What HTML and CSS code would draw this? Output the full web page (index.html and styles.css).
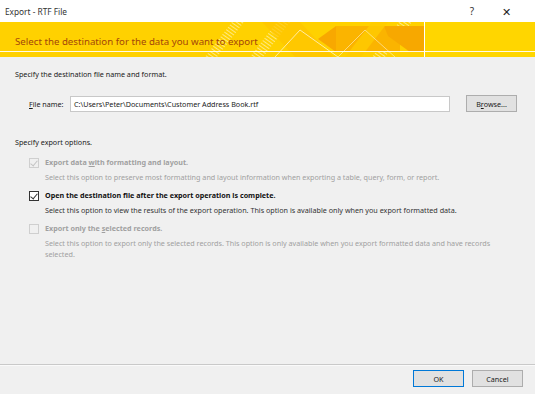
FILE: index.html
```html
<!DOCTYPE html>
<html>
  <head>
    <meta charset="UTF-8">
    <title>Export - RTF File</title>
    <link rel="stylesheet" href="styles.css">
  </head>
  <body>
    <div class="dialog">
      <header class="titlebar">
        <span class="titlebar__title">Export - RTF File</span>
        <span class="titlebar__help">?</span>
        <span class="titlebar__close">&#x2715;</span>
      </header>

      <div class="banner">
        <svg class="banner__art" width="535" height="35" viewBox="0 0 535 35">
          <defs>
            <pattern id="hatch" width="3" height="3" patternUnits="userSpaceOnUse" patternTransform="rotate(-55)">
              <rect width="1" height="3" fill="#fff" opacity="0.5"/>
            </pattern>
          </defs>
          <rect width="535" height="35" fill="#ffd100"/>
          <rect x="424" width="111" height="35" fill="#ffd600"/>
          <!-- stripes -->
          <polygon points="205,35 232,0 244,0 217,35" fill="url(#hatch)"/>
          <polygon points="250,35 277,0 290,0 263,35" fill="url(#hatch)"/>
          <polygon points="372,35 399,0 412,0 385,35" fill="url(#hatch)"/>
          <!-- arrows -->
          <polygon points="262,0 300,0 333,35 295,35" fill="#ffc400" opacity="0.7"/>
          <polygon points="318,17 336,4 336,30" fill="#f8a800"/>
          <polygon points="336,4 400,4 400,30 336,30" fill="#fbb400"/>
          <polygon points="384,4 424,4 424,30 410,30 388,14" fill="#f7a800"/>
          <polygon points="345,35 372,0 388,0 361,35" fill="#ffcc00" opacity="0.8"/>
          <polyline points="275,35 300,8 338,35" fill="none" stroke="#fff" stroke-width="0.8" opacity="0.8"/>
          <polyline points="338,35 365,8 395,35" fill="none" stroke="#fff" stroke-width="0.8" opacity="0.6"/>
          <!-- rules -->
          <rect y="29" width="535" height="1" fill="#fff" opacity="0.9"/>
          <rect x="424" width="1" height="35" fill="#fff"/>
        </svg>
        <h1 class="banner__text">Select the destination for the data you want to export</h1>
      </div>

      <main class="content">
        <p class="content__heading">Specify the destination file name and format.</p>
        <div class="file-row">
          <label class="file-row__label"><u>F</u>ile name:</label>
          <div class="file-row__input">C:\Users\Peter\Documents\Customer Address Book.rtf</div>
          <button class="btn btn--browse">B<u>r</u>owse...</button>
        </div>

        <p class="content__heading content__heading--options">Specify export options.</p>
        <ul class="options">
          <li class="option option--disabled">
            <span class="check check--on"></span>
            <div class="option__body">
              <p class="option__title">Export data <u>w</u>ith formatting and layout.</p>
              <p class="option__desc">Select this option to preserve most formatting and layout information when exporting a table, query, form, or report.</p>
            </div>
          </li>
          <li class="option">
            <span class="check check--on"></span>
            <div class="option__body">
              <p class="option__title">Open the destination file after the export operation is complete.</p>
              <p class="option__desc">Select this option to view the results of the export operation. This option is available only when you export formatted data.</p>
            </div>
          </li>
          <li class="option option--disabled">
            <span class="check"></span>
            <div class="option__body">
              <p class="option__title">Export only the <u>s</u>elected records.</p>
              <p class="option__desc">Select this option to export only the selected records. This option is only available when you export formatted data and have records selected.</p>
            </div>
          </li>
        </ul>
      </main>

      <footer class="buttons">
        <button class="btn btn--default">OK</button>
        <button class="btn">Cancel</button>
      </footer>
    </div>
  </body>
</html>
```

FILE: styles.css
```css
* {
  box-sizing: border-box;
}
body {
  margin: 0;
  font-family: "Noto Sans", "Open Sans", sans-serif;
  background-color: #f0f0f0;
  color: #1a1a1a;
}
p {
  margin: 0;
}
u {
  text-decoration-thickness: 1px;
  text-underline-offset: 1px;
}

.dialog {
  width: 535px;
  height: 394px;
  display: flex;
  flex-direction: column;
}

.titlebar {
  height: 22px;
  background-color: #fff;
  display: flex;
  align-items: center;
  padding: 0 0 0 5px;
  font-size: 8.3px;
  color: #333;
}
.titlebar__title {
  flex: 1;
}
.titlebar__help {
  width: 16px;
  margin-right: 18px;
  text-align: center;
  font-size: 10px;
}
.titlebar__close {
  width: 16px;
  margin-right: 21px;
  text-align: center;
  font-size: 11px;
  color: #222;
}

.banner {
  position: relative;
  height: 35px;
  border-bottom: solid 1px #fbe98c;
  display: flex;
  align-items: flex-start;
}
.banner__art {
  position: absolute;
  top: 0;
  left: 0;
}
.banner__text {
  position: relative;
  margin: 13px 0 0 15px;
  font-size: 9.7px;
  font-weight: 400;
  line-height: 14px;
  color: #a3460a;
}

.content {
  flex: 1;
  padding: 12px 15px 0;
  font-size: 7.2px;
}
.content__heading {
  line-height: 11px;
  color: #1a1a1a;
}
.content__heading--options {
  margin-top: 25px;
}

.file-row {
  display: flex;
  align-items: center;
  margin-top: 15px;
  padding-left: 14px;
  height: 17px;
}
.file-row__label {
  width: 41px;
}
.file-row__input {
  width: 380px;
  height: 16px;
  line-height: 14px;
  padding-left: 3px;
  background-color: #fff;
  border: solid 1px #c8c8c8;
}

.btn {
  height: 17px;
  width: 51px;
  padding: 0;
  font-family: inherit;
  font-size: 7.2px;
  color: #1a1a1a;
  background-color: #e1e1e1;
  border: solid 1px #adadad;
}
.btn--browse {
  margin-left: 16px;
}
.btn--default {
  border-color: #0078d7;
}

.options {
  list-style: none;
  margin: 9px 0 0;
  padding: 0 0 0 14px;
}
.option {
  display: flex;
  gap: 6px;
  margin-bottom: 7px;
}
.option__body {
  max-width: 460px;
}
.option__title {
  font-weight: 700;
  line-height: 11px;
  color: #111;
}
.option__desc {
  margin-top: 4px;
  line-height: 11px;
  color: #333;
}
.option--disabled .option__title,
.option--disabled .option__desc {
  color: #a0a0a0;
}

.check {
  flex: none;
  width: 10px;
  height: 10px;
  margin-top: 1px;
  background-color: #fff;
  border: solid 1px #333;
  position: relative;
}
.check--on::after {
  content: "";
  position: absolute;
  left: 2px;
  top: 0;
  width: 3px;
  height: 6px;
  border: solid #333;
  border-width: 0 1px 1px 0;
  transform: rotate(40deg);
}
.option--disabled .check {
  background-color: #f0f0f0;
  border-color: #cfcfcf;
}
.option--disabled .check--on::after {
  border-color: #c4c4c4;
}

.buttons {
  height: 30px;
  display: flex;
  justify-content: flex-end;
  gap: 8px;
  padding: 5px 12px 0 0;
  border-top: solid 1px #c9c9c9;
  box-shadow: inset 0 1px 0 #fafafa;
}
```
